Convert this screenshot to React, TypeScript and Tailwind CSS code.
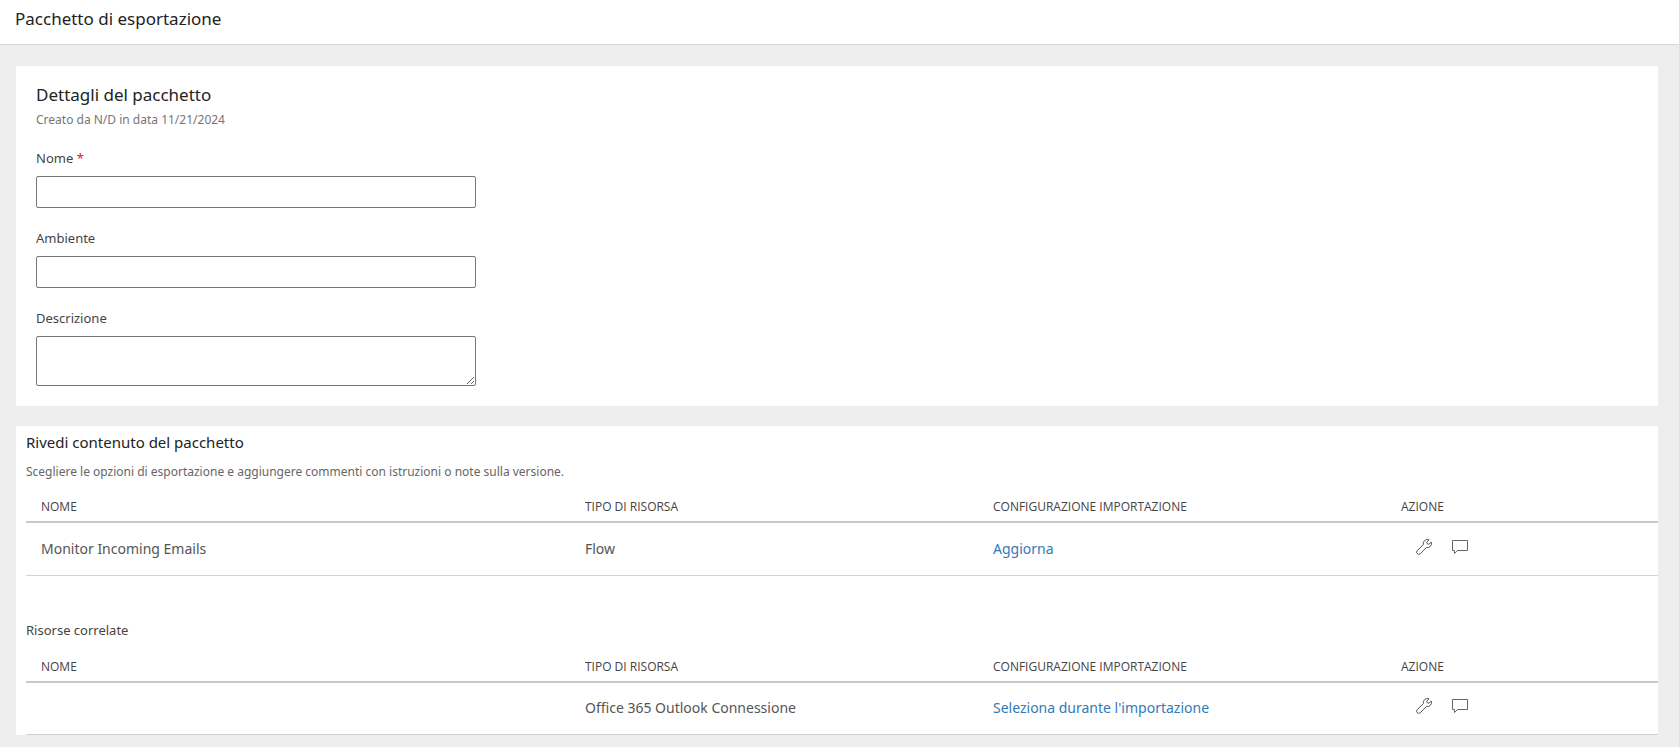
const columns = ["NOME", "TIPO DI RISORSA", "CONFIGURAZIONE IMPORTAZIONE", "AZIONE"];

const packageResources = [
  {
    name: "Monitor Incoming Emails",
    type: "Flow",
    setup: "Aggiorna"
  },
];

const relatedResources = [
  {
    name: "",
    type: "Office 365 Outlook Connessione",
    setup: "Seleziona durante l'importazione"
  },
];

const WrenchIcon = () => (
  <svg width="16" height="16" viewBox="0 0 16 16" fill="none" stroke="#555" strokeWidth="1" strokeLinejoin="round" aria-hidden="true">
    <path d="M13 .8 10.7 3.2 11.3 4.8 12.9 5.3 15.2 3A4.1 4.1 0 0 1 10.4 8.5L4.2 14.8A2.2 2.2 0 0 1 1.1 11.7L7.4 5.6A4.1 4.1 0 0 1 13 .8Z" />
  </svg>
);

const CommentIcon = () => (
  <svg width="16" height="16" viewBox="0 0 16 16" fill="none" stroke="#666" strokeWidth="1" aria-hidden="true">
    <path d="M.5 1.5H15.5V11.5H5.5L2.5 14.5V11.5H.5Z" />
  </svg>
);

const ResourceTable = ({ label, rows }: { label: string; rows: typeof packageResources }) => {
  return (
    <table className="w-full table-fixed text-left" aria-label={label}>
      <colgroup>
        <col className="w-1/3" />
        <col className="w-1/4" />
        <col className="w-1/4" />
        <col className="w-1/6" />
      </colgroup>
      <thead>
        <tr className="border-b-2 border-[#c8c8c8]">
          {columns.map((column) => (
            <th key={column} className="px-[15px] pb-1 font-['Open_Sans',sans-serif] text-xs leading-5 font-medium text-[#444]">{column}</th>
          ))}
        </tr>
      </thead>
      <tbody>
        {rows.map((row, index) => (
          <tr key={index} className="h-[53px] border-b border-[#d2d2d2] text-sm text-[#555]">
            <td className="px-[15px]">{row.name}</td>
            <td className="px-[15px]">{row.type}</td>
            <td className="px-[15px]">
              <a href="#" className="text-[#337ab7]">{row.setup}</a>
            </td>
            <td className="px-[15px] pb-1">
              <div className="flex gap-5 pl-[15px]">
                <button type="button" aria-label="Configura"><WrenchIcon /></button>
                <button type="button" aria-label="Commenta"><CommentIcon /></button>
              </div>
            </td>
          </tr>
        ))}
      </tbody>
    </table>
  );
};

const App = () => {
  return (
    <div className="min-h-screen border-r border-[#e0e0e0] bg-[#eee] font-['Noto_Sans',sans-serif] text-[#444]">
      <header className="border-b border-[#d8d8d8] bg-white px-[15px] pt-1.5 pb-3">
        <h1 className="text-[17px] leading-[26px] text-[#222]">Pacchetto di esportazione</h1>
      </header>

      <main className="flex flex-col gap-5 pt-[21px] pr-[21px] pl-4">
        <section className="bg-white px-5 pt-4 pb-5">
          <h2 className="text-[17px] leading-[26px] text-[#222]">Dettagli del pacchetto</h2>
          <p className="mt-0.5 text-xs leading-5 text-[#767676]">Creato da N/D in data 11/21/2024</p>

          <form className="mt-[18px] flex max-w-[440px] flex-col gap-5">
            <div className="flex flex-col gap-2">
              <label htmlFor="name" className="text-[13px] leading-5">
                Nome <span className="text-[#e81123]">*</span>
              </label>
              <input id="name" type="text" className="h-8 rounded-xs border border-[#767676] px-2 text-sm" />
            </div>
            <div className="flex flex-col gap-2">
              <label htmlFor="environment" className="text-[13px] leading-5">Ambiente</label>
              <input id="environment" type="text" className="h-8 rounded-xs border border-[#767676] px-2 text-sm" />
            </div>
            <div className="flex flex-col gap-2">
              <label htmlFor="description" className="text-[13px] leading-5">Descrizione</label>
              <textarea id="description" className="h-[50px] rounded-xs border border-[#767676] px-2 text-sm" />
            </div>
          </form>
        </section>

        <section className="bg-white pt-1 pl-2.5">
          <h2 className="text-[15px] leading-6 text-[#222]">Rivedi contenuto del pacchetto</h2>
          <p className="mt-2 mb-[15px] text-xs leading-5 text-[#666]">
            Scegliere le opzioni di esportazione e aggiungere commenti con istruzioni o note sulla versione.
          </p>
          <ResourceTable label="Contenuto del pacchetto" rows={packageResources} />

          <h3 className="mt-11 mb-[17px] text-[13px] leading-5">Risorse correlate</h3>
          <ResourceTable label="Risorse correlate" rows={relatedResources} />
        </section>
      </main>
    </div>
  );
};

export default App;
